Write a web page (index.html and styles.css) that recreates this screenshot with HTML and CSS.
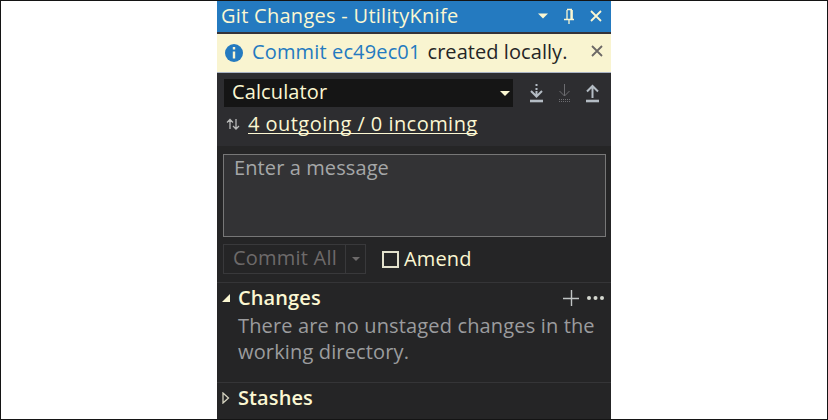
FILE: index.html
```html
<!DOCTYPE html>
<html lang="en">
<head>
<meta charset="utf-8">
<title>Git Changes</title>
<link rel="stylesheet" href="styles.css">
</head>
<body>
<main class="panel">
  <header class="titlebar">
    <h1 class="title">Git Changes - UtilityKnife</h1>
    <svg class="title-icons" width="76" height="31" viewBox="0 0 76 31">
      <path class="fill" d="M3 12.500h10l-5 5z"/>
      <path class="line" d="M32 9v9M32 8.500h5M36 9v9M37.200 9v9M29 18.500h10M34 19v4"/>
      <path class="line thick" d="M56 10l10 10M66 10l-10 10"/>
    </svg>
  </header>
  <section class="notice">
    <svg class="info" width="18" height="18" viewBox="0 0 18 18"><circle cx="9" cy="9" r="9"/><path d="M9 3v2.600M9 7.500v7"/></svg>
    <p class="notice-text"><a class="link">Commit ec49ec01</a><span class="created">created locally.</span></p>
    <svg class="dismiss" width="12" height="12" viewBox="0 0 12 12"><path d="M1 1l10 10M11 1L1 11"/></svg>
  </section>
  <section class="branch">
    <div class="branch-row">
      <div class="combo"><span class="combo-text">Calculator</span><svg width="10" height="5" viewBox="0 0 10 5"><path d="M0 0h10L5 5z"/></svg></div>
      <svg class="sync-icons" width="72" height="20" viewBox="0 0 72 20">
        <g class="on"><path d="M7.500 0v2M7.500 4v2M7.500 7v6M2 7l5.500 5.500L13 7"/><path class="base" d="M1 17h13"/></g>
        <g class="off"><path d="M35.500 0v12M30.500 7l5 5 5-5"/><path stroke-dasharray="1 1" d="M30 15.500h11M30 17.500h11"/></g>
        <g class="on"><path d="M63.500 14V2M58 7.500L63.500 2l5.500 5.500"/><path class="base" d="M57 17h13"/></g>
      </svg>
    </div>
    <div class="status-row">
      <svg width="14" height="14" viewBox="0 0 14 14"><path d="M4 12V2.500M1 5.500l3-3 3 3M10 2v10M7 9l3 3 3-3"/></svg>
      <a class="status-link">4 outgoing / 0 incoming</a>
    </div>
  </section>
  <section class="commit">
    <div class="message">Enter a message</div>
    <div class="actions">
      <div class="commit-btn"><span class="commit-label">Commit All</span><span class="commit-more"><svg width="8" height="4" viewBox="0 0 8 4"><path d="M0 0h8L4 4z"/></svg></span></div>
      <span class="check"></span><span class="amend">Amend</span>
    </div>
  </section>
  <section class="group changes">
    <div class="group-head">
      <svg class="arrow" width="8" height="8" viewBox="0 0 8 8"><path class="solid" d="M8 0v8H0z"/></svg>
      <h2>Changes</h2>
      <svg class="tools" width="42" height="16" viewBox="0 0 42 16"><path d="M8.500 0v16M0 8.500h16"/><circle cx="26" cy="8" r="2"/><circle cx="32.500" cy="8" r="2"/><circle cx="39" cy="8" r="2"/></svg>
    </div>
    <p class="empty">There are no unstaged changes in the<br>working directory.</p>
  </section>
  <section class="group stashes">
    <div class="group-head">
      <svg class="arrow" width="8" height="12" viewBox="0 0 8 12"><path class="hollow" d="M1 1v10l5.500-5z"/></svg>
      <h2>Stashes</h2>
    </div>
  </section>
</main>
</body>
</html>
```
FILE: styles.css
```css
* { box-sizing: border-box; }
body {
  margin: 0;
  width: 828px;
  height: 420px;
  overflow: hidden;
  border: 1px solid #141414;
  background: #fff;
  font: 20px/26px "Open Sans", "Noto Sans", sans-serif;
  color: #fbf7d2;
}
h1, h2, p { margin: 0; font-size: 20px; white-space: nowrap; }
svg { display: block; flex: none; }
span, a { white-space: nowrap; }
.panel {
  width: 394px;
  height: 418px;
  margin-left: 216px;
  background: #252526;
}
.titlebar {
  display: flex;
  justify-content: space-between;
  height: 31px;
  padding-left: 4px;
  background: #247ac0;
}
.title { font-weight: 400; line-height: 29px; letter-spacing: 0.28px; }
.title-icons .fill { fill: #fbf7d2; }
.line { fill: none; stroke: #fbf7d2; stroke-width: 1.3; }
.thick { stroke-width: 1.8; }
.notice {
  display: flex;
  align-items: center;
  height: 41px;
  padding: 0 8px 2px;
  border-top: 2px solid #35333a;
  border-bottom: 1px solid #aab4c4;
  background: #f9f4d0;
  color: #252526;
}
.info { margin-top: 2px; }
.info circle { fill: #247ac0; }
.info path { stroke: #f9f4d0; stroke-width: 2.4; }
.notice-text { display: flex; margin-left: 9px; }
.link { color: #247ac0; letter-spacing: 0.14px; }
.created { margin-left: 7px; letter-spacing: 0.06px; }
.dismiss { margin: -3px 0 0 auto; }
.dismiss path { stroke: #6c6865; stroke-width: 1.8; }
.branch { height: 73px; padding: 6px 8px 0 7px; background: #2d2d30; }
.branch-row { display: flex; height: 28px; }
.combo {
  display: flex;
  align-items: center;
  justify-content: space-between;
  width: 289px;
  padding: 0 3px 2px 8px;
  background: #151515;
}
.combo-text { letter-spacing: 0.12px; }
.combo svg { margin-top: 3px; }
.combo path { fill: #fbf7d2; }
.sync-icons { margin: 5px 0 0 16px; fill: none; }
.on { stroke: #b4bcc4; stroke-width: 2; }
.on .base { stroke-width: 2.6; }
.off { stroke: #6c6c70; stroke-width: 1; }
.status-row { display: flex; align-items: center; margin-top: 4px; padding-left: 2px; }
.status-row path { fill: none; stroke: #b8b9b8; stroke-width: 1.3; }
.status-link {
  margin-left: 8px;
  letter-spacing: 0.46px;
  text-decoration: underline 1px;
  text-decoration-skip-ink: none;
  text-underline-offset: 2px;
}
.commit { height: 136px; padding: 8px 5px 0 6px; }
.message {
  height: 83px;
  padding-left: 10px;
  border: 1px solid #777;
  background: #333335;
  color: #a5a7a8;
  letter-spacing: 0.1px;
}
.actions { display: flex; align-items: center; margin-top: 7px; height: 30px; }
.commit-btn { display: flex; width: 143px; height: 30px; border: 1px solid #39393b; color: #6d6a6a; }
.commit-label { width: 122px; padding-left: 9px; border-right: 1px solid #39393b; letter-spacing: 0.22px; }
.commit-more { padding: 12px 0 0 6px; }
.commit-more path { fill: #6d6a6a; }
.check { width: 17px; height: 17px; margin-left: 16px; border: 2px solid #e3e1cc; }
.amend { margin: -1px 0 0 5px; letter-spacing: 0.15px; }
.group { border-top: 1px solid #353537; }
.changes { height: 100px; }
.group-head { display: flex; align-items: center; height: 29px; padding: 0 6px 0 5px; }
.arrow { margin-right: 8px; }
.solid { fill: #fbf7d2; }
.hollow { fill: none; stroke: #d5d3c0; stroke-width: 1.3; }
h2 { font-weight: 600; letter-spacing: 0.1px; }
.tools { margin-left: auto; fill: #d5d8d0; }
.tools path { stroke: #c0c4c4; stroke-width: 1.4; }
.empty { padding: 1px 0 0 21px; color: #9b9c9e; letter-spacing: 0.15px; }
```
